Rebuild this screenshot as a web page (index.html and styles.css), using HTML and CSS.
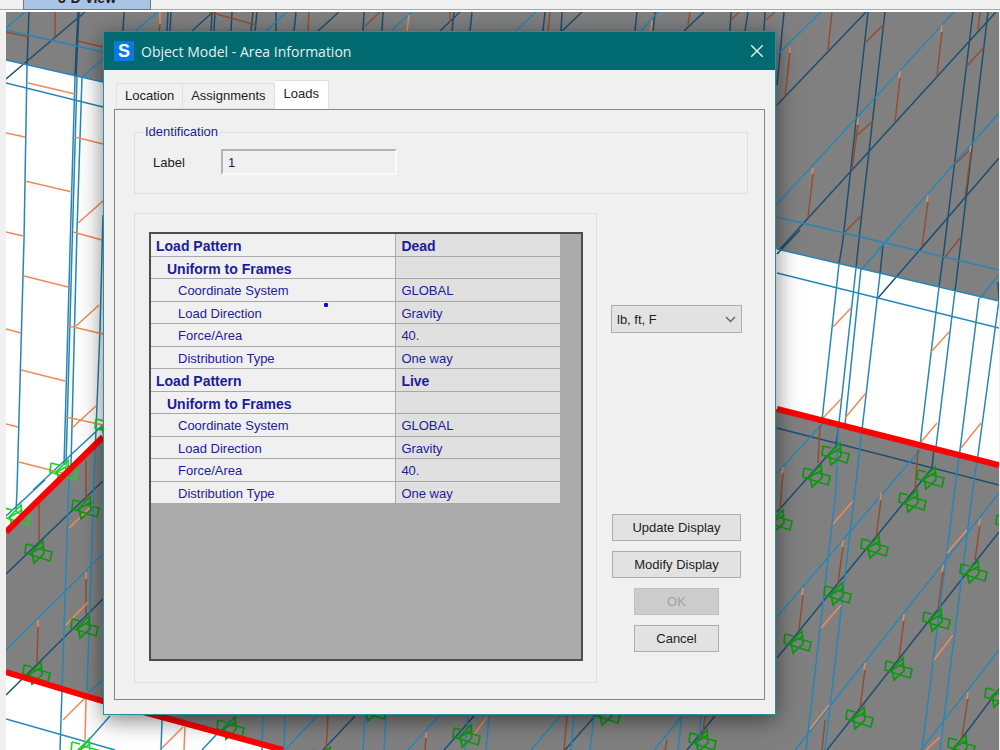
FILE: index.html
```
<!DOCTYPE html>
<html lang="en">
<head>
    <meta charset="UTF-8">
    <meta name="viewport" content="width=device-width, initial-scale=1.0">
    <title>Object Model - Area Information</title>
    <link rel="stylesheet" href="styles.css">
</head>
<body>
    <header class="view-bar">
        <div class="view-tab">3-D View</div>
    </header>

    <main class="scene">
        <!-- 3-D model -->
        <svg class="model" viewBox="6 12 993 738" preserveAspectRatio="xMidYMid slice" aria-hidden="true">
            <defs>
                <g id="joint">
                    <path d="M-12 -8L-4 -6M2 -3L14 0L12 9L-13 1L-12 -8M5 -11L-6 0L-4 11L6 2Z"/>
                    <path d="M-8 2L6 -6"/>
                </g>
            </defs>
            <path class="slab" d="M6 12H999V301L777 249L103 82L6 60Z"/>
            <path class="slab" d="M6 532L103 437L777 409L999 465V750H283L6 672Z"/>

            <!-- beams behind the slabs -->
            <path class="dark" d="M29 12L27 66M78 12L75 77M79 12L76 77M6 79L85 12M124 12L123 31M168 12L167 31M171 12L170 31M192 31L213 12M212 12L211 31M215 12L214 31M232 12L231 31M253 12L251 31M257 12L255 31M276 12L276 31M296 12L294 31M318 31L339 12M364 12L363 31M383 12L382 31M440 31L460 12M454 12L452 31M472 12L470 31M545 12L543 31M562 12L561 31M562 31L582 12M637 12L635 31M655 12L653 31M684 31L704 12M731 12L730 31M748 12L745 31"/>
            <path class="dark" d="M765 12L764 31M784 12L777 85M777 105L866 12M868 12L843 240L839 264M885 12L860 230L856 268M780 249L996 12M777 254L800 230M920 250L999 158M878 298L937 230M973 12L944 250L939 287M988 12L960 250L955 291M883 245L880 274M998 282L999 300"/>
            <path class="dark" d="M6 574L103 481M6 695L103 599M777 428L999 485M839 423L836 445M934 448L932 468M777 512L837 445M777 658L933 467M827 750L999 532M953 750L999 689M323 750L355 716M444 750L474 716M565 750L595 716M687 750L715 716"/>

            <path class="blue" d="M6 28L25 12M6 30L103 52M27 66L24 240L17 490L16 512M75 77L70 250L64 465M77 77L72 250L66 465M82 77L77 230L71 465L69 480L65 600L60 750M6 60L103 82M6 83L103 107M82 77L103 59M103 215L100 330L94 480L93 510L87 690M33 490L103 425M6 516L45 480M6 650L103 554M88 693L103 680M6 719L115 750M80 750L110 716M135 31L158 12M266 31L287 12M391 31L412 12M516 31L536 12M641 31L658 12"/>
            <path class="blue" d="M162 720L161 750M202 750L230 720M263 716L262 750M285 716L284 750M285 750L317 716M365 716L363 750M386 716L384 750M408 750L439 716M489 716L486 750M468 716L465 750M531 750L560 716M574 716L571 750M594 716L590 750M654 750L682 716M682 716L678 750M701 716L698 750"/>
            <path class="blue" d="M777 55L821 12M777 204L954 12M777 217L999 270M878 250L999 113M862 269L896 230M777 249L999 301M777 273L999 328M980 298L999 275M839 264L822 420M856 268L838 432M861 268L845 425M880 274L862 430L855 490L825 750M838 432L836 490L806 750M939 287L920 445M955 291L936 447M979 298L960 450L956 480L922 750M999 300L978 455L974 480L940 750M777 473L823 423M777 617L920 450M795 750L999 493M921 750L999 650"/>

            <path class="brown" d="M6 32L28 37M78 41L103 47M55 12L55 36M160 24L159 31M209 12L256 25M309 12L308 31M365 26L380 12M450 12L450 22M550 12L548 31M690 12L688 25M731 20L739 12M766 20L775 12M790 52L785 97M832 12L828 50M866 42L884 24M855 137L873 121M845 232L861 216M942 32L937 75M900 78L895 122M858 125L852 170M813 174L808 218M971 152L965 197M928 202L922 247M967 66L984 47M980 12L978 30M945 257L960 238M955 164L970 150"/>
            <path class="brown" d="M39 503L39 541M86 578L86 615M38 625L37 663M86 460L86 500M820 425L818 463M783 472L780 509M918 450L915 490M881 500L876 537M843 547L838 583M803 595L799 630M825 720L822 750M980 525L975 560M943 571L938 610M904 620L899 658M865 670L860 708M968 698L962 737M328 716L326 750M426 738L425 750M567 716L564 750M705 716L702 740M667 740L665 750"/>
            <path class="orange" d="M28 83L75 94M6 133L25 137M25 181L72 192M75 137L103 144M78 223L103 201M6 232L23 236M73 232L102 240M24 276L68 287M69 326L103 334M76 326L99 305M6 329L21 333M21 370L65 381M66 417L103 425M72 428L96 406M6 424L18 427M19 462L62 473M69 528L93 505M66 625L88 602M63 720L85 698M86 698L85 740M162 748L183 727M185 727L184 750M470 740L487 717"/>
            <path class="orange" d="M160 12L160 24M409 15L407 31M652 20L651 31M790 47L790 53M942 25L941 32M900 71L899 78M858 118L857 125M813 168L812 174M971 145L970 152M928 195L927 202M86 572L86 579M38 620L38 627M783 467L782 474M881 493L880 500M843 540L842 547M803 588L802 595M980 519L979 526M943 565L942 572M904 614L903 621M865 663L864 670M968 692L967 699M426 732L426 738M833 327L851 308M823 418L841 399M845 418L866 393M931 352L949 332M921 442L937 423M961 448L981 423M833 524L853 501M821 628L841 605M810 729L829 705M947 553L967 530M934 660L953 635M926 750L940 737"/>

            <g class="joints">
                <use href="#joint" x="38" y="552"/><use href="#joint" x="85" y="508"/>
                <use href="#joint" x="84" y="627"/><use href="#joint" x="36" y="673"/>
                <use href="#joint" x="230" y="728"/><use href="#joint" x="325" y="758"/>
                <use href="#joint" x="372" y="710"/><use href="#joint" x="466" y="736"/>
                <use href="#joint" x="606" y="714"/><use href="#joint" x="702" y="741"/>
                <use href="#joint" x="835" y="454"/><use href="#joint" x="816" y="476"/>
                <use href="#joint" x="930" y="478"/><use href="#joint" x="778" y="521"/>
                <use href="#joint" x="912" y="501"/><use href="#joint" x="874" y="547"/>
                <use href="#joint" x="837" y="594"/><use href="#joint" x="797" y="642"/>
                <use href="#joint" x="973" y="572"/><use href="#joint" x="936" y="620"/>
                <use href="#joint" x="898" y="669"/><use href="#joint" x="859" y="718"/>
                <use href="#joint" x="998" y="696"/><use href="#joint" x="961" y="746"/>
                <use href="#joint" x="1009" y="523"/>
            </g>
            <g class="joints joints-bright">
                <use href="#joint" x="16" y="516"/><use href="#joint" x="108" y="427"/>
                <use href="#joint" x="63" y="471"/><use href="#joint" x="84" y="750"/>
            </g>

            <path class="edge" d="M6 532L103 437M6 672L103 701L283 750M777 409L999 465"/>
        </svg>

        <section class="dialog" role="dialog" aria-labelledby="dialog-title">
            <div class="title-bar">
                <svg class="app-icon" viewBox="0 0 20 20" aria-hidden="true">
                    <rect width="20" height="20" fill="#0a78e6"/>
                    <text x="10" y="16" text-anchor="middle">S</text>
                </svg>
                <h1 id="dialog-title">Object Model - Area Information</h1>
                <button class="close-btn" type="button" aria-label="Close">
                    <svg viewBox="0 0 12 12" aria-hidden="true"><path d="M0 0L12 12M12 0L0 12"/></svg>
                </button>
            </div>

            <div class="dialog-body">
                <div class="tabs" role="tablist">
                    <button class="tab" type="button" role="tab">Location</button>
                    <button class="tab" type="button" role="tab">Assignments</button>
                    <button class="tab active" type="button" role="tab" aria-selected="true">Loads</button>
                </div>

                <div class="panel">
                    <fieldset class="identification">
                        <legend>Identification</legend>
                        <label for="area-label">Label</label>
                        <input id="area-label" type="text" value="1" readonly>
                    </fieldset>

                    <div class="loads">
                        <div class="group">
                            <div class="table-box">
                                <table>
                                    <tbody>
                                        <tr class="pattern"><th>Load Pattern</th><td>Dead</td></tr>
                                        <tr class="type"><th>Uniform to Frames</th><td></td></tr>
                                        <tr><th>Coordinate System</th><td>GLOBAL</td></tr>
                                        <tr><th>Load Direction</th><td>Gravity</td></tr>
                                        <tr><th>Force/Area</th><td>40.</td></tr>
                                        <tr><th>Distribution Type</th><td>One way</td></tr>
                                        <tr class="pattern"><th>Load Pattern</th><td>Live</td></tr>
                                        <tr class="type"><th>Uniform to Frames</th><td></td></tr>
                                        <tr><th>Coordinate System</th><td>GLOBAL</td></tr>
                                        <tr><th>Load Direction</th><td>Gravity</td></tr>
                                        <tr><th>Force/Area</th><td>40.</td></tr>
                                        <tr><th>Distribution Type</th><td>One way</td></tr>
                                    </tbody>
                                </table>
                                <span class="marker"></span>
                            </div>
                        </div>

                        <div class="side">
                            <div class="units">
                                <select aria-label="Units">
                                    <option>lb, ft, F</option>
                                </select>
                                <svg class="arrow" viewBox="0 0 11 7" aria-hidden="true"><path d="M1 1L5.500 5.500L10 1"/></svg>
                            </div>
                            <div class="actions">
                                <button class="btn wide" type="button">Update Display</button>
                                <button class="btn wide" type="button">Modify Display</button>
                                <button class="btn" type="button" disabled>OK</button>
                                <button class="btn" type="button">Cancel</button>
                            </div>
                        </div>
                    </div>
                </div>
            </div>
        </section>
    </main>
</body>
</html>
```
FILE: styles.css
```
/* Base styles */
* {
    margin: 0;
    padding: 0;
    box-sizing: border-box;
}

body {
    display: flex;
    flex-direction: column;
    min-height: 100vh;
    background: #f0f0f0;
    color: #222;
    font-family: "Liberation Sans", Arial, sans-serif;
    font-size: 13px;
}

button,
input,
select {
    font: inherit;
    color: inherit;
}

/* View tab strip */
.view-bar {
    display: flex;
    align-items: flex-end;
    height: 12px;
    padding-left: 23px;
    overflow: hidden;
    border-bottom: 2px solid #fff;
    box-shadow: inset 0 -1px #a8a8a8;
}

.view-tab {
    width: 128px;
    padding-bottom: 3px;
    background: #a9c4e4;
    border: 1px solid #777;
    border-top: none;
    text-align: center;
    font-size: 14px;
    font-weight: bold;
    line-height: 16px;
}

/* Model view */
.scene {
    position: relative;
    display: flex;
    flex: 1;
    margin: 0 1px 0 6px;
    padding: 19px 223px 35px 97px;
    background: #fff;
    overflow: hidden;
}

.model {
    position: absolute;
    top: 0;
    left: 0;
    width: 100%;
    height: 100%;
    fill: none;
    stroke-width: 1.5;
}

.slab {
    fill: #808080;
}

.dark {
    stroke: #1d4f70;
}

.blue {
    stroke: #2587b8;
}

.brown {
    stroke: #964c2e;
}

.orange {
    stroke: #f08a58;
}

.joints {
    stroke: #0b980e;
    stroke-width: 1.7;
}

.joints-bright {
    stroke: #14dc1c;
}

.edge {
    stroke: #f00;
    stroke-width: 6;
}

/* Dialog window */
.dialog {
    position: relative;
    display: flex;
    flex: 1;
    flex-direction: column;
    background: #f0f0f0;
    border: 1px solid #2f8d95;
    box-shadow: 0 5px 22px rgba(0, 0, 0, 0.5);
}

.title-bar {
    display: flex;
    align-items: center;
    gap: 7px;
    height: 38px;
    padding: 0 12px 0 10px;
    background: #006a70;
    color: #e4f0f0;
}

.title-bar h1 {
    font-family: "Open Sans", "Noto Sans", sans-serif;
    font-size: 14px;
    font-weight: normal;
}

.app-icon {
    width: 20px;
    height: 20px;
    fill: #fff;
    font-size: 18px;
    font-weight: bold;
}

.close-btn {
    margin-left: auto;
    background: none;
    border: none;
}

.close-btn svg {
    display: block;
    width: 12px;
    height: 12px;
    stroke: #e4f0f0;
    stroke-width: 1.4;
}

.dialog-body {
    display: flex;
    flex: 1;
    flex-direction: column;
    padding: 10px 10px 14px;
}

/* Tabs */
.tabs {
    display: flex;
    align-items: flex-end;
    padding-left: 2px;
}

.tab {
    height: 26px;
    padding: 0 8px 2px;
    background: #f0f0f0;
    border: 1px solid #e0e0e0;
    border-left-width: 0;
}

.tab:first-child {
    border-left-width: 1px;
}

.tab.active {
    height: 29px;
    padding: 0 9px 3px;
    background: #fff;
    border-bottom: none;
}

.panel {
    display: flex;
    flex: 1;
    flex-direction: column;
    gap: 19px;
    padding: 14px 16px 16px 19px;
    border: 1px solid #868686;
}

/* Identification */
.identification {
    display: flex;
    align-items: center;
    padding: 9px 18px 18px;
    border: 1px solid #dfdfdf;
}

.identification legend {
    margin-left: -10px;
    padding: 0 2px;
    color: #1c1c9c;
    line-height: 16px;
}

.identification label {
    width: 68px;
}

.identification input {
    width: 176px;
    height: 26px;
    padding: 0 5px;
    background: #f0f0f0;
    border: 2px solid;
    border-color: #b4b4b4 #fafafa #fafafa #b4b4b4;
    color: #1c1c5c;
}

/* Loads */
.loads {
    display: grid;
    flex: 1;
    grid-template-columns: 1fr 137px;
    gap: 14px;
}

.group {
    display: flex;
    padding: 18px 13px 21px 14px;
    border: 1px solid #dfdfdf;
}

.table-box {
    position: relative;
    flex: 1;
    padding-right: 21px;
    background: #ababab;
    border: 2px solid #4c4c4c;
}

table {
    width: 100%;
    border-collapse: separate;
    border-spacing: 0;
    color: #1c1c9c;
}

tr {
    height: 22px;
}

tr:nth-child(odd) {
    height: 23px;
}

th,
td {
    padding-top: 2px;
    padding-left: 5px;
    border-bottom: 1px solid #a8a8a8;
    text-align: left;
    font-weight: normal;
    line-height: 16px;
}

th {
    width: 60%;
    padding-left: 27px;
    background: #f0f0f0;
    border-right: 1px solid #a8a8a8;
}

td {
    background: #e0e0e0;
}

.pattern th,
.pattern td,
.type th {
    font-size: 14px;
    font-weight: bold;
}

.pattern th {
    padding-left: 5px;
}

.type th {
    padding-left: 16px;
}

/* Pen mark over the table */
.marker {
    position: absolute;
    top: 69px;
    left: 173px;
    width: 4px;
    height: 4px;
    background: #0808f0;
    border-radius: 1px;
}

/* Units and buttons */
.side {
    display: flex;
    flex-direction: column;
    justify-content: space-between;
    padding: 92px 6px 31px 0;
}

.units {
    position: relative;
}

.units select {
    width: 100%;
    height: 28px;
    padding: 0 5px;
    appearance: none;
    background: #e2e2e2;
    border: 1px solid #adadad;
    border-radius: 0;
}

.arrow {
    position: absolute;
    top: 11px;
    right: 6px;
    width: 11px;
    height: 7px;
    fill: none;
    stroke: #666;
    stroke-width: 1.5;
    pointer-events: none;
}

.actions {
    display: flex;
    flex-direction: column;
    align-items: center;
    gap: 10px;
}

.btn {
    width: 85px;
    height: 27px;
    background: #e2e2e2;
    border: 1px solid #adadad;
}

.btn.wide {
    width: 129px;
}

.btn:disabled {
    background: #cccccc;
    border-color: #bfbfbf;
    color: #a2a2a2;
}
```
